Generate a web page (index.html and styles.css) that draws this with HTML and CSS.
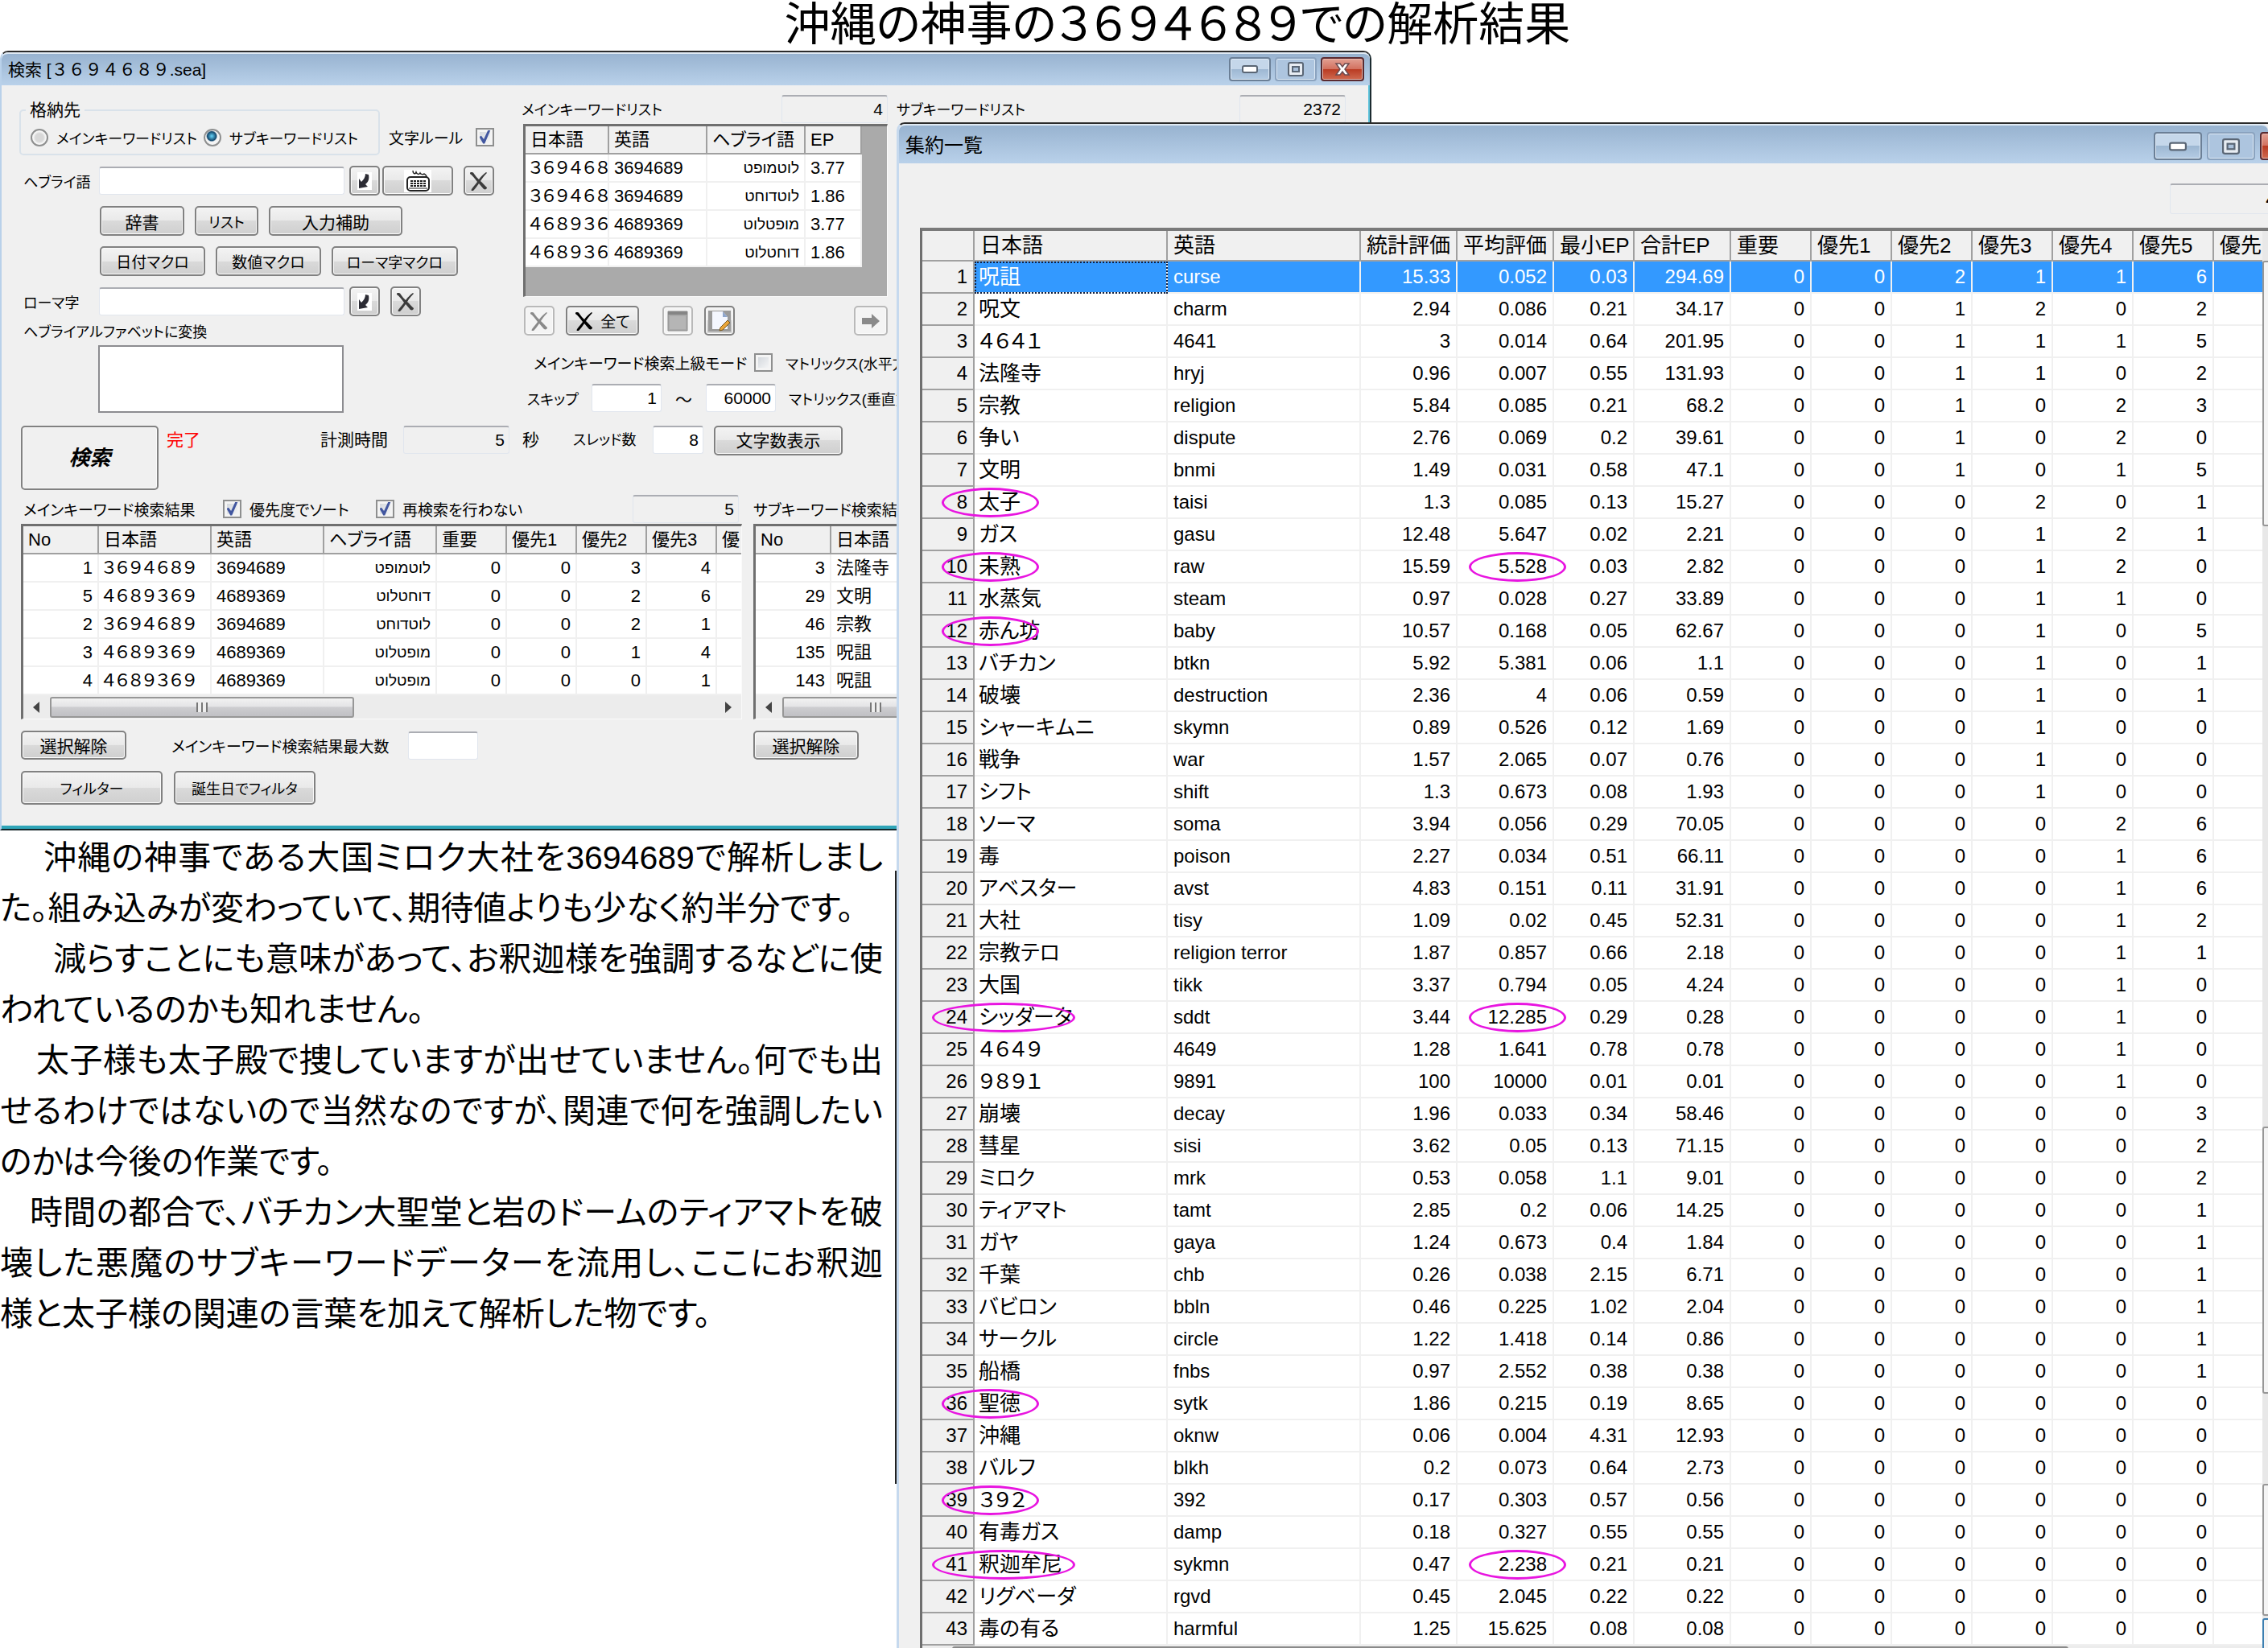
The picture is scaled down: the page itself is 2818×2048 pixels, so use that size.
FILE: index.html
```html
<!DOCTYPE html>
<html lang="ja">
<head>
<meta charset="utf-8">
<title>沖縄の神事の3694689での解析結果</title>
<link rel="stylesheet" href="styles.css">
</head>
<body>
<svg class="sprite" aria-hidden="true">
  <symbol id="i-x" viewBox="0 0 24 24"><path d="M2 1c2 0 3 0 4 2 2 3 4 5 6 7 2-3 5-6 9-9 1 0 1 1 0 2-3 3-5 6-7 9 3 3 5 5 8 8 0 2-2 3-4 2-2-2-4-5-6-7-2 3-4 6-7 9-2 1-3 0-2-2 2-3 5-6 7-9C7 9 4 5 1 3c0-1 0-2 1-2z" fill="currentColor"/></symbol>
  <symbol id="i-back" viewBox="0 0 18 22"><path d="M0 0h18v22H0z" fill="#fff"/><path d="M10 2l4 1c1 5 0 9-4 12l3 3-11 2V8l3 4c3-3 5-6 5-10z" fill="#2c2c34"/></symbol>
  <symbol id="i-keys" viewBox="0 0 34 28"><path d="M0 0h34v28H0z" fill="#fff"/><path d="M11 1c0 4 3 5 4 2 1 3 4 3 5 1 1 2 4 2 5 1 1 1 3 1 3 4" fill="none" stroke="#222" stroke-width="1.5"/><rect x="4" y="9" width="27" height="17" rx="4" fill="#fff" stroke="#222" stroke-width="2"/><path d="M8 14h19M8 17h19M8 20h19" stroke="#222" stroke-width="2" stroke-dasharray="3 1"/><path d="M6 23h23" stroke="#222"/></symbol>
  <symbol id="i-window" viewBox="0 0 26 26"><path d="M1 1h24v24H1z" fill="#a8a8a8" stroke="#8d8d8d"/><path d="M1 1h24v4H1z" fill="#858585"/><path d="M3 7h20v16H3z" fill="#b5b5b5"/></symbol>
  <symbol id="i-edit" viewBox="0 0 28 26"><path d="M0 0h28v26H0z" fill="#9a9a9a"/><path d="M5 1h13l6 7v15H5z" fill="#f4f7ff"/><path d="M18 1v7h6z" fill="#8fa6cc"/><path d="M24 12l3 3-9 9-4 1 1-4z" fill="#e9a53a" stroke="#7a5a20"/></symbol>
  <symbol id="i-go" viewBox="0 0 24 20"><path d="M1 6h12V1l10 9-10 9v-5H1z" fill="#8a8a8a"/></symbol>
  <symbol id="i-min" viewBox="0 0 20 10"><rect x="1" y="1" width="18" height="8" rx="2" fill="#fff" stroke="#5a6675" stroke-width="2"/></symbol>
  <symbol id="i-max" viewBox="0 0 20 18"><rect x="1" y="1" width="18" height="16" rx="2" fill="#e8edf3" stroke="#5a6675" stroke-width="2"/><rect x="6" y="6" width="8" height="6" fill="#a9c0da" stroke="#5a6675" stroke-width="2"/></symbol>
  <symbol id="i-close" viewBox="0 0 20 18"><path d="M2 2h5l3 4 3-4h5l-5 7 5 7h-5l-3-4-3 4H2l5-7z" fill="#fff" stroke="#6d4b50" stroke-width="1.5"/></symbol>
  <symbol id="i-left" viewBox="0 0 8 14"><path d="M8 0v14L0 7z" fill="#444"/></symbol>
  <symbol id="i-right" viewBox="0 0 8 14"><path d="M0 0v14l8-7z" fill="#444"/></symbol>
</svg>

<h1>沖縄の神事の３６９４６８９での解析結果</h1>

<main>
<section class="window search-window">
  <header class="titlebar">
    <h2>検索 [３６９４６８９.sea]</h2>
    <div class="caption-buttons">
      <button class="cap" aria-label="最小化"><svg width="20" height="10"><use href="#i-min"/></svg></button>
      <button class="cap dim" aria-label="最大化"><svg width="20" height="18"><use href="#i-max"/></svg></button>
      <button class="cap close" aria-label="閉じる"><svg width="20" height="18"><use href="#i-close"/></svg></button>
    </div>
  </header>

  <div class="search-body">
    <div class="upper">
      <div class="form">
        <div class="row top-row">
          <fieldset>
            <legend>格納先</legend>
            <div class="radios">
              <input type="radio" name="dest" id="dest-main"><label class="kana" for="dest-main">メインキーワードリスト</label>
              <input type="radio" name="dest" id="dest-sub" checked><label class="kana" for="dest-sub">サブキーワードリスト</label>
            </div>
          </fieldset>
          <div class="rule"><label class="mix" for="rule">文字ルール</label><input type="checkbox" id="rule" checked></div>
        </div>
        <div class="row">
          <label class="kana lead" for="hebrew">ヘブライ語</label><input type="text" class="long" id="hebrew">
          <button class="btn icon" aria-label="取込"><svg width="18" height="22"><use href="#i-back"/></svg></button>
          <button class="btn keys" aria-label="キーボード"><svg width="34" height="28"><use href="#i-keys"/></svg></button>
          <button class="btn icon clear" aria-label="消去"><svg width="24" height="24"><use href="#i-x"/></svg></button>
        </div>
        <div class="row tools">
          <button class="btn w105">辞書</button><button class="btn w79 kana">リスト</button><button class="btn w166">入力補助</button>
        </div>
        <div class="row tools">
          <button class="btn w131 mix">日付マクロ</button><button class="btn w131 mix">数値マクロ</button><button class="btn w157 kana">ローマ字マクロ</button>
        </div>
        <div class="row">
          <label class="kana lead" for="romaji">ローマ字</label><input type="text" class="long" id="romaji">
          <button class="btn icon" aria-label="取込"><svg width="18" height="22"><use href="#i-back"/></svg></button>
          <button class="btn icon clear" aria-label="消去"><svg width="24" height="24"><use href="#i-x"/></svg></button>
        </div>
        <label class="kana convert-label" for="convert">ヘブライアルファベットに変換</label>
        <textarea id="convert"></textarea>
      </div>

      <div class="keywords">
        <div class="list-head">
          <label class="kana" for="main-count">メインキーワードリスト</label>
          <input type="text" class="count" id="main-count" value="4" readonly>
        </div>
        <div class="grid-box main-list">
          <table>
            <colgroup><col class="c104"><col class="c122"><col class="c122"><col class="c70"></colgroup>
            <thead><tr><th>日本語<th>英語<th>ヘブライ語<th>EP</thead>
            <tbody>
            <tr><td class="wide">３６９４６８<td>3694689<td class="he">לוטמופט<td>3.77
            <tr><td class="wide">３６９４６８<td>3694689<td class="he">לוטדוחט<td>1.86
            <tr><td class="wide">４６８９３６<td>4689369<td class="he">מופטלוט<td>3.77
            <tr><td class="wide">４６８９３６<td>4689369<td class="he">דוחטלוט<td>1.86
            </tbody>
          </table>
        </div>
        <div class="row list-tools">
          <button class="btn icon off" aria-label="削除"><svg width="24" height="24"><use href="#i-x"/></svg></button>
          <button class="btn all mix"><svg width="24" height="24"><use href="#i-x"/></svg>全て</button>
          <button class="btn icon off" aria-label="一覧"><svg width="26" height="26"><use href="#i-window"/></svg></button>
          <button class="btn icon" aria-label="編集"><svg width="28" height="26"><use href="#i-edit"/></svg></button>
          <button class="btn icon off go" aria-label="移動"><svg width="24" height="20"><use href="#i-go"/></svg></button>
        </div>
        <div class="row mode">
          <label class="mix" for="adv">メインキーワード検索上級モード</label><input type="checkbox" id="adv">
          <span class="kana matrix">マトリックス(水平方向)</span>
        </div>
        <div class="row skip">
          <label class="kana" for="skip-from">スキップ</label><input type="text" class="num" id="skip-from" value="1">
          <label class="tilde" for="skip-to">～</label><input type="text" class="num" id="skip-to" value="60000">
          <span class="kana matrix">マトリックス(垂直方向)</span>
        </div>
      </div>

      <div class="list-head sub-head">
        <label class="kana" for="sub-count">サブキーワードリスト</label>
        <input type="text" class="count" id="sub-count" value="2372" readonly>
      </div>
    </div>

    <div class="status">
      <button class="btn search">検索</button>
      <span class="done">完了</span>
      <label class="time-label" for="time">計測時間</label>
      <input type="text" class="count" id="time" value="5" readonly>
      <span class="sec">秒</span>
      <label class="kana thread-label" for="threads">スレッド数</label>
      <input type="text" class="threads" id="threads" value="8">
      <button class="btn w160">文字数表示</button>
    </div>

    <div class="results">
      <div class="result-main">
        <div class="result-head">
          <label class="mix head-title" for="result-count">メインキーワード検索結果</label>
          <input type="checkbox" id="sort" checked><label class="mix sort-label" for="sort">優先度でソート</label>
          <input type="checkbox" id="again" checked><label class="mix" for="again">再検索を行わない</label>
          <input type="text" class="count" id="result-count" value="5" readonly>
        </div>
        <div class="grid-box">
          <div class="clip">
          <table>
            <colgroup><col class="c94"><col class="c140"><col class="c140"><col class="c140"><col class="c87"><col class="c87"><col class="c87"><col class="c87"><col class="c32"></colgroup>
            <thead><tr><th>No<th>日本語<th>英語<th>ヘブライ語<th>重要<th>優先1<th>優先2<th>優先3<th>優</thead>
            <tbody>
            <tr><td class="n">1<td class="wide">３６９４６８９<td>3694689<td class="he">לוטמופט<td class="n">0<td class="n">0<td class="n">3<td class="n">4<td>
            <tr><td class="n">5<td class="wide">４６８９３６９<td>4689369<td class="he">דוחטלוט<td class="n">0<td class="n">0<td class="n">2<td class="n">6<td>
            <tr><td class="n">2<td class="wide">３６９４６８９<td>3694689<td class="he">לוטדוחט<td class="n">0<td class="n">0<td class="n">2<td class="n">1<td>
            <tr><td class="n">3<td class="wide">４６８９３６９<td>4689369<td class="he">מופטלוט<td class="n">0<td class="n">0<td class="n">1<td class="n">4<td>
            <tr><td class="n">4<td class="wide">４６８９３６９<td>4689369<td class="he">מופטלוט<td class="n">0<td class="n">0<td class="n">0<td class="n">1<td>
            </tbody>
          </table>
          </div>
          <div class="hscroll"><svg width="8" height="14"><use href="#i-left"/></svg><div class="thumb main-thumb"><i></i></div><svg class="end" width="8" height="14"><use href="#i-right"/></svg></div>
        </div>
        <div class="row deselect">
          <button class="btn w131">選択解除</button>
          <label class="mix max-label" for="max">メインキーワード検索結果最大数</label><input type="text" class="num" id="max">
        </div>
        <div class="row filters">
          <button class="btn w176 kana">フィルター</button><button class="btn w176 kana">誕生日でフィルタ</button>
        </div>
      </div>

      <div class="result-sub">
        <div class="result-head"><span class="mix">サブキーワード検索結果</span></div>
        <div class="grid-box">
          <div class="clip">
          <table>
            <colgroup><col class="c94"><col class="c140"></colgroup>
            <thead><tr><th>No<th>日本語</thead>
            <tbody>
            <tr><td class="n">3<td>法隆寺
            <tr><td class="n">29<td>文明
            <tr><td class="n">46<td>宗教
            <tr><td class="n">135<td>呪詛
            <tr><td class="n">143<td>呪詛
            </tbody>
          </table>
          </div>
          <div class="hscroll"><svg width="8" height="14"><use href="#i-left"/></svg><div class="thumb sub-thumb"><i></i></div></div>
        </div>
        <div class="row deselect"><button class="btn w131">選択解除</button></div>
      </div>
    </div>
  </div>
</section>

<article>
  <p class="in-3">沖縄の神事である大国ミロク大社を3694689で解析しました。組み込みが変わっていて、期待値よりも少なく約半分です。</p>
  <p class="in-4">減らすことにも意味があって、お釈迦様を強調するなどに使われているのかも知れません。</p>
  <p class="in-2">太子様も太子殿で捜していますが出せていません。何でも出せるわけではないので当然なのですが、関連で何を強調したいのかは今後の作業です。</p>
  <p class="in-1">時間の都合で、バチカン大聖堂と岩のドームのティアマトを破壊した悪魔のサブキーワードデーターを流用し、ここにお釈迦様と太子様の関連の言葉を加えて解析した物です。</p>
</article>
<div class="shade"></div>

<section class="window summary-window">
  <header class="titlebar">
    <h2>集約一覧</h2>
    <div class="caption-buttons">
      <button class="cap" aria-label="最小化"><svg width="22" height="12"><use href="#i-min"/></svg></button>
      <button class="cap dim" aria-label="最大化"><svg width="22" height="20"><use href="#i-max"/></svg></button>
      <button class="cap close" aria-label="閉じる"><svg width="20" height="18"><use href="#i-close"/></svg></button>
    </div>
  </header>
  <div class="summary-body">
    <input type="text" class="count total" value="43" aria-label="件数" readonly>
    <div class="summary-grid">
      <div class="clip">
      <table>
        <colgroup><col class="c65"><col class="c240"><col class="c240"><col class="c120"><col class="c120"><col class="c100"><col class="c120"><col class="c100"><col class="c100"><col class="c100"><col class="c100"><col class="c100"><col class="c100"><col class="c62"></colgroup>
        <thead><tr><th><th>日本語<th>英語<th>統計評価<th>平均評価<th>最小EP<th>合計EP<th>重要<th>優先1<th>優先2<th>優先3<th>優先4<th>優先5<th>優先</thead>
        <tbody>
        <tr class="sel"><th>1<td class="focus">呪詛<td>curse<td>15.33<td>0.052<td>0.03<td>294.69<td>0<td>0<td>2<td>1<td>1<td>6<td>
        <tr><th>2<td>呪文<td>charm<td>2.94<td>0.086<td>0.21<td>34.17<td>0<td>0<td>1<td>2<td>0<td>2<td>
        <tr><th>3<td>４６４１<td>4641<td>3<td>0.014<td>0.64<td>201.95<td>0<td>0<td>1<td>1<td>1<td>5<td>
        <tr><th>4<td>法隆寺<td>hryj<td>0.96<td>0.007<td>0.55<td>131.93<td>0<td>0<td>1<td>1<td>0<td>2<td>
        <tr><th>5<td>宗教<td>religion<td>5.84<td>0.085<td>0.21<td>68.2<td>0<td>0<td>1<td>0<td>2<td>3<td>
        <tr><th>6<td>争い<td>dispute<td>2.76<td>0.069<td>0.2<td>39.61<td>0<td>0<td>1<td>0<td>2<td>0<td>
        <tr><th>7<td>文明<td>bnmi<td>1.49<td>0.031<td>0.58<td>47.1<td>0<td>0<td>1<td>0<td>1<td>5<td>
        <tr><th>8<td>太子<span class="ring"></span><td>taisi<td>1.3<td>0.085<td>0.13<td>15.27<td>0<td>0<td>0<td>2<td>0<td>1<td>
        <tr><th>9<td>ガス<td>gasu<td>12.48<td>5.647<td>0.02<td>2.21<td>0<td>0<td>0<td>1<td>2<td>1<td>
        <tr><th>10<td>未熟<span class="ring"></span><td>raw<td>15.59<td>5.528<span class="ring value"></span><td>0.03<td>2.82<td>0<td>0<td>0<td>1<td>2<td>0<td>
        <tr><th>11<td>水蒸気<td>steam<td>0.97<td>0.028<td>0.27<td>33.89<td>0<td>0<td>0<td>1<td>1<td>0<td>
        <tr><th>12<td>赤ん坊<span class="ring"></span><td>baby<td>10.57<td>0.168<td>0.05<td>62.67<td>0<td>0<td>0<td>1<td>0<td>5<td>
        <tr><th>13<td>バチカン<td>btkn<td>5.92<td>5.381<td>0.06<td>1.1<td>0<td>0<td>0<td>1<td>0<td>1<td>
        <tr><th>14<td>破壊<td>destruction<td>2.36<td>4<td>0.06<td>0.59<td>0<td>0<td>0<td>1<td>0<td>1<td>
        <tr><th>15<td>シャーキムニ<td>skymn<td>0.89<td>0.526<td>0.12<td>1.69<td>0<td>0<td>0<td>1<td>0<td>0<td>
        <tr><th>16<td>戦争<td>war<td>1.57<td>2.065<td>0.07<td>0.76<td>0<td>0<td>0<td>1<td>0<td>0<td>
        <tr><th>17<td>シフト<td>shift<td>1.3<td>0.673<td>0.08<td>1.93<td>0<td>0<td>0<td>1<td>0<td>0<td>
        <tr><th>18<td>ソーマ<td>soma<td>3.94<td>0.056<td>0.29<td>70.05<td>0<td>0<td>0<td>0<td>2<td>6<td>
        <tr><th>19<td>毒<td>poison<td>2.27<td>0.034<td>0.51<td>66.11<td>0<td>0<td>0<td>0<td>1<td>6<td>
        <tr><th>20<td>アベスター<td>avst<td>4.83<td>0.151<td>0.11<td>31.91<td>0<td>0<td>0<td>0<td>1<td>6<td>
        <tr><th>21<td>大社<td>tisy<td>1.09<td>0.02<td>0.45<td>52.31<td>0<td>0<td>0<td>0<td>1<td>2<td>
        <tr><th>22<td>宗教テロ<td>religion terror<td>1.87<td>0.857<td>0.66<td>2.18<td>0<td>0<td>0<td>0<td>1<td>1<td>
        <tr><th>23<td>大国<td>tikk<td>3.37<td>0.794<td>0.05<td>4.24<td>0<td>0<td>0<td>0<td>1<td>0<td>
        <tr><th>24<td>シッダータ<span class="ring long-ring"></span><td>sddt<td>3.44<td>12.285<span class="ring value"></span><td>0.29<td>0.28<td>0<td>0<td>0<td>0<td>1<td>0<td>
        <tr><th>25<td>４６４９<td>4649<td>1.28<td>1.641<td>0.78<td>0.78<td>0<td>0<td>0<td>0<td>1<td>0<td>
        <tr><th>26<td>９８９１<td>9891<td>100<td>10000<td>0.01<td>0.01<td>0<td>0<td>0<td>0<td>1<td>0<td>
        <tr><th>27<td>崩壊<td>decay<td>1.96<td>0.033<td>0.34<td>58.46<td>0<td>0<td>0<td>0<td>0<td>3<td>
        <tr><th>28<td>彗星<td>sisi<td>3.62<td>0.05<td>0.13<td>71.15<td>0<td>0<td>0<td>0<td>0<td>2<td>
        <tr><th>29<td>ミロク<td>mrk<td>0.53<td>0.058<td>1.1<td>9.01<td>0<td>0<td>0<td>0<td>0<td>2<td>
        <tr><th>30<td>ティアマト<td>tamt<td>2.85<td>0.2<td>0.06<td>14.25<td>0<td>0<td>0<td>0<td>0<td>1<td>
        <tr><th>31<td>ガヤ<td>gaya<td>1.24<td>0.673<td>0.4<td>1.84<td>0<td>0<td>0<td>0<td>0<td>1<td>
        <tr><th>32<td>千葉<td>chb<td>0.26<td>0.038<td>2.15<td>6.71<td>0<td>0<td>0<td>0<td>0<td>1<td>
        <tr><th>33<td>バビロン<td>bbln<td>0.46<td>0.225<td>1.02<td>2.04<td>0<td>0<td>0<td>0<td>0<td>1<td>
        <tr><th>34<td>サークル<td>circle<td>1.22<td>1.418<td>0.14<td>0.86<td>0<td>0<td>0<td>0<td>0<td>1<td>
        <tr><th>35<td>船橋<td>fnbs<td>0.97<td>2.552<td>0.38<td>0.38<td>0<td>0<td>0<td>0<td>0<td>1<td>
        <tr><th>36<td>聖徳<span class="ring"></span><td>sytk<td>1.86<td>0.215<td>0.19<td>8.65<td>0<td>0<td>0<td>0<td>0<td>0<td>
        <tr><th>37<td>沖縄<td>oknw<td>0.06<td>0.004<td>4.31<td>12.93<td>0<td>0<td>0<td>0<td>0<td>0<td>
        <tr><th>38<td>バルフ<td>blkh<td>0.2<td>0.073<td>0.64<td>2.73<td>0<td>0<td>0<td>0<td>0<td>0<td>
        <tr><th>39<td>３９２<span class="ring"></span><td>392<td>0.17<td>0.303<td>0.57<td>0.56<td>0<td>0<td>0<td>0<td>0<td>0<td>
        <tr><th>40<td>有毒ガス<td>damp<td>0.18<td>0.327<td>0.55<td>0.55<td>0<td>0<td>0<td>0<td>0<td>0<td>
        <tr><th>41<td>釈迦牟尼<span class="ring long-ring"></span><td>sykmn<td>0.47<td>2.238<span class="ring value"></span><td>0.21<td>0.21<td>0<td>0<td>0<td>0<td>0<td>0<td>
        <tr><th>42<td>リグベーダ<td>rgvd<td>0.45<td>2.045<td>0.22<td>0.22<td>0<td>0<td>0<td>0<td>0<td>0<td>
        <tr><th>43<td>毒の有る<td>harmful<td>1.25<td>15.625<td>0.08<td>0.08<td>0<td>0<td>0<td>0<td>0<td>0<td>
        </tbody>
      </table>
      <div class="summary-hscroll"><div></div></div>
      </div>
      <div class="vscroll"><div class="v1"></div><div class="v2"></div><div class="v3"></div><div class="v4"></div></div>
    </div>
  </div>
</section>
</main>
</body>
</html>
```
FILE: styles.css
```css
* { box-sizing: border-box; }

body {
  margin: 0;
  height: 100vh;
  overflow: hidden;
  position: relative;
  background: #fff;
  color: #000;
  font-family: "Liberation Sans", "Noto Sans CJK JP", sans-serif;
  font-size: 21px;
  font-feature-settings: "palt";
}

.sprite { position: absolute; width: 0; height: 0; }
svg { display: block; flex: none; }

h1, h2, p { margin: 0; font-weight: normal; }
h1 {
  padding-left: 108px;
  font-size: 57px;
  line-height: 60px;
  height: 63px;
  text-align: center;
  white-space: nowrap;
}

button, input, textarea {
  margin: 0;
  font: inherit;
  font-feature-settings: inherit;
  color: inherit;
}
label, span, legend, button { flex: none; white-space: nowrap; }
.kana { font-size: 18px; }
.mix { font-size: 19px; }

/* Window frame */
.window { background: #f0f0f0; border-top: 2px solid #2b2b2b; border-radius: 10px 10px 0 0; }
.titlebar {
  display: flex;
  justify-content: space-between;
  border-top: 2px solid #dfe9f3;
  border-radius: 8px 8px 0 0;
  background: linear-gradient(#98b3d0, #b9d1ea);
}
.titlebar h2 { font-feature-settings: normal; }
.caption-buttons { display: flex; gap: 5px; }
.cap {
  display: flex;
  align-items: center;
  justify-content: center;
  padding: 0;
  border: 2px solid #6b7f96;
  border-radius: 4px;
  background: linear-gradient(#c5d7ea 50%, #9db7d2 50%, #b5cce4);
  box-shadow: inset 0 0 0 1px #dce8f4;
}
.cap.dim { border-color: #8ba3bf; background: #adc5df; }
.cap.close { border-color: #5a2a30; background: linear-gradient(#e2a093, #d2705e 50%, #b93a22 50%, #cf6a50); box-shadow: inset 0 0 0 1px #eab7ac; }

.search-window {
  width: 1704px;
  border-right: 2px solid #1c2b30;
  border-bottom: 2px solid #16282c;
  border-left: 2px solid #b9d1ea;
}
.search-window .titlebar { height: 41px; padding: 4px 7px 0 8px; }
.search-window h2 { font-size: 21px; line-height: 32px; }
.search-window .cap { width: 52px; height: 30px; }
.search-window .cap.close { width: 54px; }
.search-body {
  padding: 12px 0 26px 22px;
  border-right: 2px solid #5fc4dc;
  border-bottom: 4px solid #2fa5b8;
}

/* Controls */
.btn {
  display: flex;
  align-items: center;
  justify-content: center;
  height: 37px;
  padding: 0;
  border: 2px solid #818181;
  border-radius: 5px;
  background: linear-gradient(#f3f3f3, #e9e9e9 50%, #dadada 50%, #cfcfcf);
  box-shadow: inset 0 0 0 1px #fafafa;
}
.icon { width: 38px; color: #3c3c3c; }
.off { border-color: #b9b9b9; background: #f4f4f4; color: #8a8a8a; }
.keys { width: 88px; }
.w79 { width: 79px; }
.w105 { width: 105px; }
.w131 { width: 131px; }
.w157 { width: 157px; }
.w160 { width: 160px; }
.w166 { width: 166px; }
.w176 { width: 176px; }

input[type="text"], textarea {
  flex: none;
  height: 35px;
  padding: 0 5px;
  border: 1px solid #e1e6ee;
  border-top: 2px solid #abadb3;
  border-radius: 3px;
  background: #fff;
  font-size: 21px;
}
.long { width: 305px; }
input.count { width: 132px; background: #f0f0f0; text-align: right; }
input.num { width: 87px; text-align: right; }
input.threads { width: 63px; text-align: right; }

input[type="checkbox"] {
  appearance: none;
  flex: none;
  display: flex;
  align-items: center;
  justify-content: center;
  width: 23px;
  height: 23px;
  border: 2px solid #8e8f8f;
  background: linear-gradient(135deg, #cdd2d8, #fbfbfb);
  box-shadow: inset 0 0 0 3px #f4f4f4;
}
input[type="checkbox"]:checked::after {
  content: "";
  width: 14px;
  height: 17px;
  background: #4257a0;
  clip-path: polygon(0 50%, 18% 42%, 40% 68%, 78% 0, 100% 0, 48% 100%, 34% 100%);
}
input[type="radio"] {
  appearance: none;
  flex: none;
  width: 22px;
  height: 22px;
  border: 2px solid #8e8f8f;
  border-radius: 50%;
  background: radial-gradient(circle, #d8d8d8 40%, #f6f6f6 60%);
}
input[type="radio"]:checked { background: radial-gradient(circle at 45% 40%, #5cc4e8 5%, #12486e 38%, #f4f4f4 48%); }

/* Search form */
.row { display: flex; align-items: center; min-height: 24px; }
.upper { display: flex; }
.form { width: 624px; flex: none; padding-top: 9px; display: flex; flex-direction: column; gap: 13px; }
.form .row { min-height: 37px; }
.top-row { height: 66px; }
fieldset {
  width: 448px;
  height: 66px;
  margin: 0;
  padding: 0 0 0 12px;
  border: 2px solid #d9e2ea;
  border-radius: 5px;
}
legend { padding: 0 5px; margin-left: -6px; line-height: 20px; }
.radios { display: flex; align-items: center; height: 44px; padding-top: 4px; }
.radios label { width: 181px; padding-left: 10px; margin-right: 12px; }
.radios label:last-child { margin-right: 0; }
.rule { display: flex; align-items: center; padding: 20px 0 0 11px; }
.rule label { width: 108px; }
.lead { width: 99px; padding-left: 5px; }
.form .icon, .form .keys { margin-left: 6px; }
.form .icon + .keys { margin-left: 3px; }
.form .clear { margin-left: 13px; }
.tools { gap: 13px; padding-left: 100px; }
.convert-label { padding-left: 5px; line-height: 24px; margin-top: -5px; }
textarea { width: 305px; height: 84px; margin: -9px 0 0 98px; resize: none; border: 2px solid #8c8c90; border-radius: 0; }

.keywords { width: 455px; flex: none; }
.list-head { display: flex; align-items: center; justify-content: space-between; height: 34px; }
.sub-head { width: 558px; flex: none; margin-left: 11px; }
.grid-box {
  border: 1px solid #fafafa;
  border-top: 3px solid #6f6f6f;
  border-left: 3px solid #6f6f6f;
}
.main-list { height: 215px; margin: 2px 0 0 2px; background: #aaa; }
.list-tools { margin-top: 11px; padding-left: 3px; }
.all { width: 91px; gap: 8px; margin: 0 29px 0 14px; }
.list-tools .icon + .icon { margin-left: 14px; }
.list-tools .go.icon { margin-left: auto; width: 42px; }
.mode { margin-top: 20px; padding-left: 15px; }
.mode label { width: 274px; }
.matrix { margin-left: 16px; }
.skip { margin-top: 13px; padding-left: 7px; }
.skip label { width: 80px; }
.skip label.tilde { width: 55px; text-align: center; }

/* Status strip */
.status { display: flex; height: 80px; margin-top: 16px; padding-left: 2px; line-height: 36px; }
.search { width: 171px; height: 80px; margin-right: 10px; font-size: 26px; font-weight: bold; font-style: italic; background: #f0f0f0; }
.done { width: 191px; color: #f00; }
.time-label { width: 103px; }
.sec { width: 79px; padding-left: 16px; }
.thread-label { width: 99px; }
.threads { margin-right: 13px; }

/* Grids */
table { border-collapse: separate; border-spacing: 0; table-layout: fixed; width: 0; font-size: 22px; }
th, td {
  height: 35px;
  padding: 0 6px;
  overflow: hidden;
  text-align: left;
  font-weight: normal;
  line-height: 24px;
  white-space: nowrap;
  background: #fff;
  border-right: 2px solid #f0f0f0;
  border-bottom: 2px solid #f0f0f0;
}
th { background: #f0f0f0; border-color: #a0a0a0; }
.wide { padding: 0 4px; }
.n { text-align: right; }
.he { direction: rtl; text-align: right; font-size: 19px; }
td.he { text-align: start; }
.c32 { width: 32px; }
.c62 { width: 62px; }
.c65 { width: 65px; }
.c70 { width: 70px; }
.c87 { width: 87px; }
.c94 { width: 94px; }
.c100 { width: 100px; }
.c104 { width: 104px; }
.c120 { width: 120px; }
.c122 { width: 122px; }
.c140 { width: 140px; }
.c240 { width: 240px; }
.clip { overflow: hidden; }

.results { display: flex; gap: 14px; margin-top: 5px; padding-left: 2px; }
.result-main { width: 896px; flex: none; }
.result-sub { flex: 1; min-width: 0; }
.result-head { display: flex; align-items: center; height: 36px; padding: 0 4px 0 3px; }
.result-sub .result-head { padding-left: 0; }
.head-title { width: 248px; }
.result-head input + label { padding-left: 10px; }
.sort-label { width: 167px; }
.result-head .count { margin-left: auto; }
.results .grid-box { height: 243px; margin-top: 1px; }
.results .clip { height: 210px; }
.results th:last-child { padding-right: 0; }
.hscroll { display: flex; align-items: center; height: 29px; padding: 0 12px; background: #ececec; }
.thumb {
  display: flex;
  align-items: center;
  justify-content: center;
  height: 26px;
  margin-left: 13px;
  border: 2px solid #979797;
  border-radius: 3px;
  background: linear-gradient(#f2f2f2, #e4e4e6 45%, #cdcdd0 50%, #c0c0c4);
}
.thumb i { width: 14px; height: 12px; background: repeating-linear-gradient(90deg, #777 0 2px, #eee 2px 6px); }
.main-thumb { width: 378px; }
.sub-thumb { width: 232px; }
.end { margin-left: auto; }
.deselect { margin-top: 14px; }
.deselect .btn { height: 36px; }
.max-label { width: 350px; padding-left: 56px; }
.filters { gap: 14px; margin-top: 14px; }
.filters .btn { height: 42px; }

/* Commentary */
article { width: 1097px; margin-top: 3px; font-size: 41px; line-height: 63px; text-align: justify; }
.in-1 { text-indent: 37px; }
.in-2 { text-indent: 45px; }
.in-3 { text-indent: 54px; }
.in-4 { text-indent: 66px; }
.shade { position: absolute; left: 1112px; top: 1082px; width: 2px; height: 762px; background: #222; }

/* Summary window */
.summary-window { position: absolute; left: 1114px; right: 0; top: 152px; border-left: 3px solid #c6d9ee; border-radius: 10px 0 0 0; overflow: hidden; }
.summary-window .titlebar { height: 49px; padding: 8px 0 0 8px; }
.summary-window h2 { font-size: 24px; line-height: 34px; }
.summary-window .caption-buttons { gap: 6px; margin-right: -50px; }
.summary-window .cap { width: 60px; height: 35px; }
.summary-body { padding: 25px 0 0 26px; }
.total { display: block; margin: 0 -30px 17px auto; }
input.total { height: 38px; width: 152px; font-size: 24px; }
.summary-grid { display: flex; border-top: 4px solid #7a7a7a; border-left: 3px solid #6f6f6f; }
.summary-grid .clip { flex: 1; min-width: 0; }
.summary-grid table { font-size: 26px; }
.summary-grid th, .summary-grid td { height: 40px; padding: 0 7px; line-height: 30px; overflow: visible; }
.summary-grid thead th { height: 38px; }
.summary-grid thead th:last-child { padding-right: 0; }
.summary-grid td { position: relative; font-size: 24px; text-align: right; }
.summary-grid td:nth-child(2), .summary-grid td:nth-child(3) { text-align: left; }
.summary-grid td:nth-child(2) { padding: 0 5px; font-size: 26px; }
.summary-grid tbody th { font-size: 24px; text-align: right; }
.summary-grid .sel td { background: #3399ff; color: #fff; }
.sel .focus { outline: 2px dotted #124; outline-offset: -2px; }
.ring {
  position: absolute;
  z-index: 1;
  left: -41px;
  top: 1px;
  width: 121px;
  height: 37px;
  border: 3px solid #e815e0;
  border-radius: 50%;
}
.long-ring { left: -53px; width: 178px; }
.ring.value { left: 14px; }
.summary-hscroll { height: 20px; padding: 1px 241px 0 37px; background: #ececec; }
.summary-hscroll div { height: 18px; border: 2px solid #8a8a8a; border-radius: 3px; background: #e4e4e6; }
.vscroll { width: 7px; flex: none; padding-top: 37px; background: #e8e8e8; }
.vscroll div { width: 20px; border: 2px solid #979797; border-radius: 3px; background: #f4f4f4; }
.v1 { height: 330px; }
.vscroll .v2 { height: 332px; margin-top: 746px; }
.vscroll .v3 { height: 164px; margin-top: 112px; }
.vscroll .v4 { height: 40px; margin-top: 3px; border-color: #3c7fb1; }
```
